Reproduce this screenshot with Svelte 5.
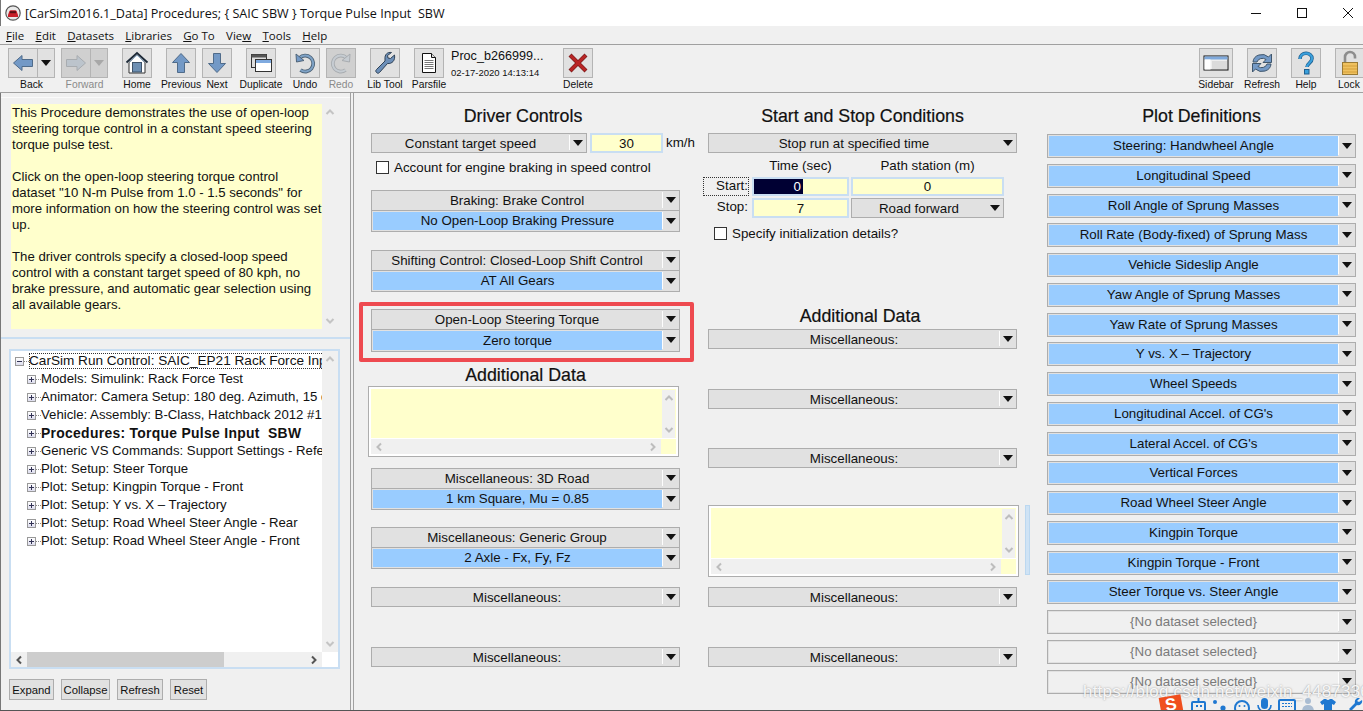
<script>
  const menus = [["F","ile"],["E","dit"],["D","atasets"],["L","ibraries"],["G","o To"],["Vie","w"],["T","ools"],["H","elp"]];
  const help = [
    "This Procedure demonstrates the use of open-loop",
    "steering torque control in a constant speed steering",
    "torque pulse test.",
    "",
    "Click on the open-loop steering torque control",
    "dataset \"10 N-m Pulse from 1.0 - 1.5 seconds\" for",
    "more information on how the steering control was set",
    "up.",
    "",
    "The driver controls specify a closed-loop speed",
    "control with a constant target speed of 80 kph, no",
    "brake pressure, and automatic gear selection using",
    "all available gears."
  ];
  const tree = [
    "Models: Simulink: Rack Force Test",
    "Animator: Camera Setup: 180 deg. Azimuth, 15 deg. Elevation",
    "Vehicle: Assembly: B-Class, Hatchback 2012 #1",
    "Procedures: Torque Pulse Input  SBW",
    "Generic VS Commands: Support Settings - Reference",
    "Plot: Setup: Steer Torque",
    "Plot: Setup: Kingpin Torque - Front",
    "Plot: Setup: Y vs. X – Trajectory",
    "Plot: Setup: Road Wheel Steer Angle - Rear",
    "Plot: Setup: Road Wheel Steer Angle - Front"
  ];
  const plots = [
    "Steering: Handwheel Angle","Longitudinal Speed","Roll Angle of Sprung Masses",
    "Roll Rate (Body-fixed) of Sprung Mass","Vehicle Sideslip Angle","Yaw Angle of Sprung Masses",
    "Yaw Rate of Sprung Masses","Y vs. X – Trajectory","Wheel Speeds","Longitudinal Accel. of CG's",
    "Lateral Accel. of CG's","Vertical Forces","Road Wheel Steer Angle","Kingpin Torque",
    "Kingpin Torque - Front","Steer Torque vs. Steer Angle"
  ];
  const empties = [1,2,3];
</script>

{#snippet chev(dir, color)}
  <svg class="chev" viewBox="0 0 10 10" width="10" height="10">
    {#if dir === "up"}<polyline points="1.5,7 5,3.5 8.5,7" stroke={color} />{/if}
    {#if dir === "down"}<polyline points="1.5,3 5,6.5 8.5,3" stroke={color} />{/if}
    {#if dir === "left"}<polyline points="7,1.5 3.5,5 7,8.5" stroke={color} />{/if}
    {#if dir === "right"}<polyline points="3,1.5 6.5,5 3,8.5" stroke={color} />{/if}
  </svg>
{/snippet}

{#snippet row(text, blue)}
  <div class="row">
    <span class="field" class:blue={blue}>{text}</span>
    <span class="btn"><i class="arrow"></i></span>
  </div>
{/snippet}

{#snippet stack(top, bottom, cls)}
  <div class="stack {cls}">
    {@render row(top, false)}
    {@render row(bottom, true)}
  </div>
{/snippet}

{#snippet single(text, cls)}
  <div class="single {cls}">{@render row(text, false)}</div>
{/snippet}

{#snippet memo(cls)}
  <div class="memo {cls}">
    <div class="memo-text"></div>
    <div class="memo-v">{@render chev("up", "#bdbdbd")}{@render chev("down", "#bdbdbd")}</div>
    <div class="memo-h">{@render chev("left", "#bdbdbd")}{@render chev("right", "#bdbdbd")}</div>
    <div class="memo-corner"></div>
  </div>
{/snippet}

<div class="window">
  <header class="titlebar">
    <svg class="appicon" viewBox="0 0 16 16" width="16" height="16">
      <circle cx="8" cy="8" r="7.2" fill="#e9e9e9" stroke="#555" stroke-width="1.2"/>
      <path d="M3 10 L4.2 6.6 Q4.6 5.2 6 5.2 H10 Q11.4 5.2 11.8 6.6 L13 10 V12 H3 Z" fill="#c8202a"/>
      <rect x="5" y="6.2" width="6" height="2" fill="#5a1015"/>
    </svg>
    <span class="title">[CarSim2016.1_Data] Procedures; &#123; SAIC SBW &#125; Torque Pulse Input  SBW</span>
    <div class="winctl">
      <svg viewBox="0 0 12 12" width="12" height="12"><line x1="1" y1="6.5" x2="11" y2="6.5" stroke="#111"/></svg>
      <svg viewBox="0 0 12 12" width="12" height="12"><rect x="1.5" y="1.5" width="9" height="9" fill="none" stroke="#111"/></svg>
      <svg viewBox="0 0 12 12" width="12" height="12"><path d="M1 1 L11 11 M11 1 L1 11" stroke="#111"/></svg>
    </div>
  </header>

  <nav class="menubar">
    {#each menus as m, i}
      <span class="menu">
        {#if i === 5}Vie<u>w</u>{:else}<u>{m[0]}</u>{m[1]}{/if}
      </span>
    {/each}
  </nav>

  <div class="toolbar">
    <div class="tool wide">
      <div class="face split">
        <span class="main-ic"><svg viewBox="0 0 22 20" width="22" height="20"><path d="M1.5 10 L10 2.5 V6.5 H20.5 V13.5 H10 V17.5 Z" fill="#7399c6" stroke="#4f6b8a"/></svg></span>
        <span class="drop"><i class="arrow"></i></span>
      </div>
      <span class="label">Back</span>
    </div>
    <div class="tool wide g6 off">
      <div class="face split">
        <span class="main-ic"><svg viewBox="0 0 22 20" width="22" height="20"><path d="M20.5 10 L12 2.5 V6.5 H1.5 V13.5 H12 V17.5 Z" fill="#bcc4cc" stroke="#a8acb0"/></svg></span>
        <span class="drop"><i class="arrow grey"></i></span>
      </div>
      <span class="label">Forward</span>
    </div>
    <div class="tool g14">
      <div class="face"><svg viewBox="0 0 24 24" width="24" height="24">
        <path d="M4 11.5 L12 4 L20 11.5 V22 H4 Z" fill="#fff" stroke="#333"/>
        <path d="M1.5 11.5 L12 2 L22.5 11.5" fill="none" stroke="#1d2a38" stroke-width="1.8"/>
        <path d="M4.5 11 L12 4.2 L19.5 11" fill="none" stroke="#8fb0cf" stroke-width="1"/>
        <rect x="7.5" y="11.5" width="9" height="9.5" fill="#6d8fb3" stroke="#3d5269"/>
      </svg></div>
      <span class="label">Home</span>
    </div>
    <div class="tool g14">
      <div class="face"><svg viewBox="0 0 22 24" width="22" height="24"><path d="M11 2.5 L19.5 11.5 H14.5 V21.5 H7.5 V11.5 H2.5 Z" fill="#7399c6" stroke="#4f6b8a"/></svg></div>
      <span class="label">Previous</span>
    </div>
    <div class="tool g6">
      <div class="face"><svg viewBox="0 0 22 24" width="22" height="24"><path d="M11 21.5 L19.5 12.5 H14.5 V2.5 H7.5 V12.5 H2.5 Z" fill="#7399c6" stroke="#4f6b8a"/></svg></div>
      <span class="label">Next</span>
    </div>
    <div class="tool g14">
      <div class="face"><svg viewBox="0 0 24 24" width="24" height="24">
        <rect x="2.5" y="3.5" width="15" height="13" fill="#ddd" stroke="#333"/>
        <rect x="2.5" y="3.5" width="15" height="3" fill="#555"/>
        <rect x="6.5" y="8.5" width="16" height="12" fill="#fff" stroke="#333"/>
        <rect x="7" y="9" width="15" height="3" fill="#7faadf"/>
      </svg></div>
      <span class="label">Duplicate</span>
    </div>
    <div class="tool g14">
      <div class="face"><svg viewBox="0 0 24 24" width="24" height="24">
        <path d="M6.5 7 A8 8 0 1 1 7.5 19" fill="none" stroke="#4f6478" stroke-width="3.8"/>
        <path d="M6.5 7 A8 8 0 1 1 7.5 19" fill="none" stroke="#7ea2c6" stroke-width="2"/>
        <path d="M3 3 L3.5 11 L11 9.5 Z" fill="#7399c6" stroke="#4f6478"/>
      </svg></div>
      <span class="label">Undo</span>
    </div>
    <div class="tool g6 off">
      <div class="face"><svg viewBox="0 0 24 24" width="24" height="24">
        <path d="M17.5 7 A8 8 0 1 0 16.5 19" fill="none" stroke="#a8acb0" stroke-width="3.8"/>
        <path d="M17.5 7 A8 8 0 1 0 16.5 19" fill="none" stroke="#c6ccd2" stroke-width="2"/>
        <path d="M21 3 L20.5 11 L13 9.5 Z" fill="#c6ccd2" stroke="#a8acb0"/>
      </svg></div>
      <span class="label">Redo</span>
    </div>
    <div class="tool g14">
      <div class="face"><svg viewBox="0 0 24 24" width="24" height="24">
        <path d="M21.5 4 L17.5 7.5 L15 7 L14.5 4.5 L18.5 1.5 C14.5 0.8 11.5 3.5 12 8 L12 10 L3.5 18.5 C2.5 19.5 2.5 20.5 3.5 21.5 C4.5 22.5 5.5 22.5 6.5 21.5 L14.5 12.5 C19 13 22.5 9.5 21.5 4 Z" fill="#6d8fb8" stroke="#2f4256"/>
      </svg></div>
      <span class="label">Lib Tool</span>
    </div>
    <div class="tool g14">
      <div class="face"><svg viewBox="0 0 20 24" width="20" height="24">
        <path d="M3.5 2.5 H12.5 L16.5 6.5 V21.5 H3.5 Z" fill="#fff" stroke="#111"/>
        <path d="M12.5 2.5 V6.5 H16.5" fill="#ddd" stroke="#111"/>
        <path d="M5.5 9.5 H14.5 M5.5 11.5 H14.5 M5.5 13.5 H14.5 M5.5 15.5 H14.5 M5.5 17.5 H14.5" stroke="#777"/>
      </svg></div>
      <span class="label">Parsfile</span>
    </div>
    <div class="proc">
      <div class="proc-name">Proc_b266999...</div>
      <div class="proc-date">02-17-2020 14:13:14</div>
    </div>
    <div class="tool del">
      <div class="face"><svg viewBox="0 0 24 24" width="24" height="24">
        <path d="M5.5 5.5 L18.5 18.5 M18.5 5.5 L5.5 18.5" stroke="#7d1c1c" stroke-width="4.2" stroke-linecap="square"/>
        <path d="M5.5 5.5 L18.5 18.5 M18.5 5.5 L5.5 18.5" stroke="#b92525" stroke-width="2.8" stroke-linecap="square"/>
      </svg></div>
      <span class="label">Delete</span>
    </div>

    <div class="tool sidebar">
      <div class="face"><svg viewBox="0 0 26 16" width="26" height="16">
        <rect x="1" y="1" width="24" height="14" fill="#eee" stroke="#111"/>
        <rect x="1.5" y="1.5" width="23" height="3" fill="#7fa9dc"/>
        <rect x="1.5" y="4.5" width="6" height="10" fill="#fff"/>
        <path d="M9 7 H24 M9 9 H24 M9 11 H24 M9 13 H24" stroke="#c8c8c8"/>
      </svg></div>
      <span class="label">Sidebar</span>
    </div>
    <div class="tool g14">
      <div class="face"><svg viewBox="0 0 24 24" width="24" height="24">
        <path d="M3 11 A9 8 0 0 1 18.5 6 L21.5 3 V11.5 H13 L16 8.5 A5.6 5 0 0 0 7 11 Z" fill="#7399c6" stroke="#3f566c"/>
        <path d="M21 13 A9 8 0 0 1 5.5 18 L2.5 21 V12.5 H11 L8 15.5 A5.6 5 0 0 0 17 13 Z" fill="#7399c6" stroke="#3f566c"/>
      </svg></div>
      <span class="label">Refresh</span>
    </div>
    <div class="tool g14">
      <div class="face"><svg viewBox="0 0 20 24" width="20" height="24">
        <path d="M4 8 C4 0.5 16 0.5 16 7.5 C16 12 11 12 11 16" fill="none" stroke="#1f5f8f" stroke-width="3.6"/>
        <path d="M4 8 C4 0.5 16 0.5 16 7.5 C16 12 11 12 11 16" fill="none" stroke="#3aa0dc" stroke-width="2.2"/>
        <rect x="8.5" y="18.5" width="4.5" height="4.5" fill="#3aa0dc" stroke="#1f5f8f"/>
      </svg></div>
      <span class="label">Help</span>
    </div>
    <div class="tool g14">
      <div class="face"><svg viewBox="0 0 18 26" width="18" height="26">
        <path d="M4 13 V7 A5 5 0 0 1 14 7 V8.5" fill="none" stroke="#8d8d8d" stroke-width="2.6"/>
        <rect x="1.5" y="12.5" width="15" height="12" fill="#efc15f" stroke="#9a7a34"/>
        <path d="M2 16 H16 M2 19 H16 M2 22 H16" stroke="#d49f3a"/>
      </svg></div>
      <span class="label">Lock</span>
    </div>
  </div>

  <div class="body">
    <aside class="left">
      <div class="helpbox">
        <div class="helptext">
          {#each help as line}<div class="hl">{line}</div>{/each}
        </div>
        <div class="vbar">{@render chev("up", "#c4c4c4")}{@render chev("down", "#c4c4c4")}</div>
      </div>
      <div class="split-line"></div>
      <div class="treebox">
        <div class="tree">
          <div class="tr root">
            <span class="pm minus"></span><i class="conn"></i><span class="tt focus">CarSim Run Control: SAIC_EP21 Rack Force Input</span>
          </div>
          {#each tree as t, i}
            <div class="tr child" class:strong={i === 3}>
              <span class="pm plus"></span><i class="conn"></i><span class="tt">{t}</span>
            </div>
          {/each}
        </div>
        <div class="vbar tv">{@render chev("up", "#c4c4c4")}{@render chev("down", "#c4c4c4")}</div>
        <div class="hbar">
          <span class="hend">{@render chev("left", "#555")}</span>
          <span class="thumb"></span>
          <span class="hend">{@render chev("right", "#555")}</span>
        </div>
      </div>
      <div class="treebtns">
        <button class="b-expand">Expand</button>
        <button class="b-collapse">Collapse</button>
        <button class="b-refresh">Refresh</button>
        <button class="b-reset">Reset</button>
      </div>
    </aside>

    <main class="panel">
      <section class="col c1">
        <h2 class="head shift">Driver Controls</h2>
        <div class="speedrow">
          <div class="single speed">{@render row("Constant target speed", false)}</div>
          <div class="inp speedval">30</div>
          <span class="unit">km/h</span>
        </div>
        <label class="check ck1"><i class="box"></i>Account for engine braking in speed control</label>
        {@render stack("Braking: Brake Control", "No Open-Loop Braking Pressure", "m14")}
        {@render stack("Shifting Control: Closed-Loop Shift Control", "AT All Gears", "m18")}
        <div class="redwrap">
          {@render stack("Open-Loop Steering Torque", "Zero torque", "")}
          <div class="redbox"></div>
        </div>
        <h2 class="head h-add">Additional Data</h2>
        {@render memo("memo1")}
        {@render stack("Miscellaneous: 3D Road", "1 km Square, Mu = 0.85", "m11")}
        {@render stack("Miscellaneous: Generic Group", "2 Axle - Fx, Fy, Fz", "m17")}
        {@render single("Miscellaneous:", "m18")}
        {@render single("Miscellaneous:", "m40")}
      </section>

      <section class="col c2">
        <h2 class="head">Start and Stop Conditions</h2>
        {@render single("Stop run at specified time", "m6 plain")}
        <div class="times">
          <span></span><span class="th">Time (sec)</span><span class="th">Path station (m)</span>
          <span class="lab startlab">Start:</span>
          <div class="inp sel"><span class="hi"><b>0</b></span></div>
          <div class="inp">0</div>
          <span class="lab stoplab">Stop:</span>
          <div class="inp">7</div>
          <div class="single plain">{@render row("Road forward", false)}</div>
        </div>
        <label class="check ck2"><i class="box"></i>Specify initialization details?</label>
        <h2 class="head h-add2">Additional Data</h2>
        {@render single("Miscellaneous:", "m2")}
        {@render single("Miscellaneous:", "m40")}
        {@render single("Miscellaneous:", "m39")}
        <div class="memowrap">
          {@render memo("memo2")}
          <div class="strip"></div>
        </div>
        {@render single("Miscellaneous:", "m10")}
        {@render single("Miscellaneous:", "m40")}
      </section>

      <section class="col c3">
        <h2 class="head">Plot Definitions</h2>
        <div class="plots">
          {#each plots as p}
            <div class="plot">{@render row(p, true)}</div>
          {/each}
          {#each empties as e}
            <div class="plot none">{@render row("{No dataset selected}", false)}</div>
          {/each}
        </div>
      </section>
    </main>
  </div>

  <div class="watermark">https://blog.csdn.net/weixin_44873367</div>
  <div class="tray">
    <span class="slogo">S</span>
    <svg viewBox="0 0 173 13" width="173" height="13">
      <g fill="#1f78d1">
        <rect x="2" y="4" width="13" height="9" rx="1" fill="none" stroke="#1f78d1" stroke-width="2"/>
        <rect x="7.5" y="0" width="2" height="5"/>
        <rect x="6" y="7" width="2" height="2"/><rect x="10" y="7" width="2" height="2"/>
        <circle cx="25" cy="4" r="2"/><circle cx="33" cy="10" r="2.6"/>
        <circle cx="52" cy="10" r="7" fill="none" stroke="#1f78d1" stroke-width="2"/>
        <circle cx="49.5" cy="8" r="1"/><circle cx="54.5" cy="8" r="1"/>
        <rect x="71" y="0" width="7" height="11" rx="3.5"/>
        <path d="M68 7 a6.5 6.5 0 0 0 13 0" fill="none" stroke="#1f78d1" stroke-width="1.6"/>
        <rect x="89" y="2" width="16" height="12" rx="1" fill="none" stroke="#1f78d1" stroke-width="2"/>
        <path d="M92 5.5 h10 M92 8.5 h10" stroke="#1f78d1" stroke-dasharray="2 1"/>
        <circle cx="118" cy="3" r="3" fill="#a9bcd2"/>
        <path d="M112 14 q0 -7 6 -7 q6 0 6 7 z" fill="#a9bcd2"/>
        <path d="M130 4 l4 -3 h2 q2 2 4 0 h2 l4 3 -2 3 -2 -1 v8 h-8 v-8 l-2 1 z"/>
        <path d="M170 0 a4 4 0 0 0 -5 5 l-6 6 2 2 6 -6 a4 4 0 0 0 5 -5 l-3 2 -2 -1 z"/>
      </g>
    </svg>
  </div>
</div>

<style>
  :global(body) { margin: 0; background: #f0f0f0; }
  .window {
    position: relative;
    width: 1363px;
    height: 711px;
    overflow: hidden;
    background: #f0f0f0;
    font-family: "Liberation Sans", Arial, sans-serif;
    font-size: 14px;
    color: #111;
    box-sizing: border-box;
    border-bottom: 1px solid #555;
    display: flex;
    flex-direction: column;
  }
  .titlebar {
    height: 26px;
    flex: none;
    background: #fff;
    display: flex;
    align-items: center;
    padding-left: 4px;
    border-left: 1px solid #777;
  }
  .appicon { margin-right: 4px; }
  .title {
    font-family: "Open Sans", "Noto Sans", sans-serif;
    font-size: 12.6px;
    white-space: pre;
    color: #111;
  }
  .winctl { margin-left: auto; display: flex; gap: 34px; padding-right: 9px; }
  .menubar {
    height: 18px;
    flex: none;
    display: flex;
    align-items: center;
    gap: 11.3px;
    padding-left: 6px;
    font-family: "Open Sans", "Noto Sans", sans-serif;
    font-size: 11.5px;
    color: #111;
  }
  .toolbar {
    flex: none;
    height: 49px;
    box-sizing: border-box;
    border-top: 1px solid #a0a0a0;
    border-bottom: 1px solid #a0a0a0;
    display: flex;
    padding: 3px 0 0 8px;
  }
  .tool {
    width: 30px;
    flex: none;
    display: flex;
    flex-direction: column;
    align-items: center;
  }
  .tool.wide { width: 47px; }
  .g6 { margin-left: 6px; }
  .g14 { margin-left: 14px; }
  .face {
    width: 100%;
    height: 30px;
    box-sizing: border-box;
    border: 1px solid #b4b4b4;
    background: #e1e1e1;
    display: flex;
    align-items: center;
    justify-content: center;
    flex: none;
  }
  .off .face { background: #d0d0d0; }
  .split { justify-content: flex-start; }
  .main-ic {
    width: 28px;
    height: 100%;
    border-right: 1px solid #b4b4b4;
    display: flex;
    align-items: center;
    justify-content: center;
  }
  .drop { flex: 1; display: flex; justify-content: center; }
  .label {
    font-size: 10.3px;
    line-height: 12px;
    margin-top: 1px;
    white-space: nowrap;
    color: #111;
  }
  .off .label { color: #8a8a8a; }
  .proc { margin-left: 7px; width: 112px; flex: none; }
  .proc-name { font-size: 12.6px; line-height: 14px; margin-top: 1px; white-space: nowrap; }
  .proc-date { font-size: 9.5px; line-height: 12px; margin-top: 4px; white-space: nowrap; }
  .del { margin-left: 0; }
  .sidebar { margin-left: auto; width: 34px; }
  .toolbar > .tool:last-child { width: 28px; }
  .toolbar > .tool:last-child .face { width: 30px; align-self: flex-start; }

  .arrow {
    display: block;
    width: 0;
    height: 0;
    border-left: 5.5px solid transparent;
    border-right: 5.5px solid transparent;
    border-top: 6px solid #111;
  }
  .arrow.grey { border-top-color: #a8a8a8; }

  .body { flex: 1; min-height: 0; display: flex; }
  .left {
    width: 351px;
    flex: none;
    box-sizing: border-box;
    border-left: 1px solid #777;
    border-right: 1px solid #a0a0a0;
    display: flex;
    flex-direction: column;
    padding: 11px 0 0 0;
    position: relative;
  }
  .left::before {
    content: "";
    position: absolute;
    left: 0;
    right: 0;
    top: 4px;
    height: 1px;
    background: #fafafa;
  }
  .helpbox {
    margin-left: 10px;
    width: 327px;
    height: 225px;
    flex: none;
    background: #ffc;
    display: flex;
  }
  .helptext { flex: 1; min-width: 0; padding: 1px 0 0 1px; font-size: 13.2px; }
  .hl { height: 16px; line-height: 16px; white-space: nowrap; }
  .vbar {
    width: 16px;
    flex: none;
    background: #f0f0f0;
    display: flex;
    flex-direction: column;
    justify-content: space-between;
    align-items: center;
    padding: 3px 0;
    box-sizing: border-box;
  }
  .split-line {
    height: 2px;
    flex: none;
    margin-top: 8px;
    background: #c9def2;
  }
  .treebox {
    margin: 10px 0 0 8px;
    width: 331px;
    height: 320px;
    flex: none;
    box-sizing: border-box;
    border: 2px solid #c9def2;
    background: #fff;
    position: relative;
    display: grid;
    grid-template-columns: 311px 16px;
    grid-template-rows: 301px 15px;
  }
  .tree { overflow: hidden; padding-top: 1px; font-size: 13.2px; }
  .tr { height: 18px; display: flex; align-items: center; white-space: pre; }
  .tr.root { padding-left: 4px; }
  .tr.child { padding-left: 16px; }
  .conn {
    width: 5px;
    flex: none;
    height: 0;
    border-top: 1px dotted #888;
  }
  .root .tt { font-size: 13.6px; }
  .tt { line-height: 16px; }
  .focus { outline: 1px dotted #333; outline-offset: -1px; }
  .strong .tt { font-weight: 700; font-size: 13.9px; letter-spacing: 0.3px; }
  .pm {
    width: 9px;
    height: 9px;
    flex: none;
    box-sizing: border-box;
    border: 1px solid #999;
    background: linear-gradient(#fff, #dde);
    position: relative;
  }
  .pm::before {
    content: "";
    position: absolute;
    left: 1px;
    top: 3px;
    width: 5px;
    height: 1px;
    background: #335;
  }
  .plus::after {
    content: "";
    position: absolute;
    left: 3px;
    top: 1px;
    width: 1px;
    height: 5px;
    background: #335;
  }
  .tv { background: #f0f0f0; }
  .hbar {
    grid-column: 1;
    grid-row: 2;
    background: #f0f0f0;
    display: flex;
    align-items: center;
  }
  .hend { width: 16px; flex: none; display: flex; justify-content: center; }
  .hend:last-child { margin-left: auto; }
  .thumb { width: 197px; height: 100%; background: #cdcdcd; }
  .chev { display: block; }
  .chev polyline { fill: none; stroke-width: 2; }
  .treebtns { display: flex; gap: 7px; margin: 10px 0 0 8px; }
  .treebtns button {
    height: 21px;
    padding: 0;
    box-sizing: border-box;
    border: 1px solid #adadad;
    background: #e1e1e1;
    font: 11.3px "Liberation Sans", Arial, sans-serif;
    color: #111;
  }
  .b-expand { width: 45px; }
  .b-collapse { width: 49px; }
  .b-refresh { width: 46px; }
  .b-reset { width: 37px; }

  .panel {
    flex: 1;
    min-width: 0;
    margin-left: 2px;
    border-left: 1px solid #a0a0a0;
    display: flex;
    padding: 12px 0 0 17px;
  }
  .col { width: 309px; flex: none; display: flex; flex-direction: column; }
  .c2 { margin-left: 28px; }
  .c3 { margin-left: 30px; }
  .head {
    margin: 0;
    height: 22px;
    line-height: 23px;
    font-size: 17.8px;
    font-weight: 400;
    text-align: center;
    white-space: nowrap;
    -webkit-text-stroke: 0.2px #111;
  }
  .shift { padding-right: 5px; }
  .h-add { margin-top: 12px; }
  .h-add2 { margin-top: 63px; margin-right: 5px; }

  .row { display: flex; flex: 1; min-height: 0; }
  .field {
    flex: 1;
    min-width: 0;
    display: flex;
    align-items: center;
    justify-content: center;
    white-space: nowrap;
    font-size: 13.35px;
    box-sizing: border-box;
    padding-bottom: 1px;
  }
  .single .field { padding-bottom: 0; }
  .field.blue { background: #9cf; margin: 1px 0 1px 1px; }
  .btn {
    width: 17px;
    flex: none;
    display: flex;
    align-items: center;
    justify-content: center;
    border-left: 1px solid #fdfdfd;
    margin: 1px 0 2px;
    box-sizing: border-box;
  }
  .single, .stack {
    box-sizing: border-box;
    border: 1px solid #adadad;
    background: #e1e1e1;
    display: flex;
    flex: none;
  }
  .single { height: 20px; }
  .stack { height: 42px; flex-direction: column; }
  .stack > .row:first-child { border-bottom: 1px solid #adadad; max-height: 19px; }
  .plain .btn { border-left: 0; }
  .m2 { margin-top: 2px; }
  .m6 { margin-top: 6px; }
  .m10 { margin-top: 10px; }
  .m11 { margin-top: 11px; }
  .m14 { margin-top: 14px; }
  .m17 { margin-top: 17px; }
  .m18 { margin-top: 18px; }
  .m39 { margin-top: 39px; }
  .m40 { margin-top: 40px; }

  .speedrow { margin-top: 6px; display: flex; height: 20px; }
  .speed { width: 216px; }
  .inp {
    box-sizing: border-box;
    border: 2px solid #c9def2;
    background: #ffc;
    display: flex;
    align-items: center;
    justify-content: center;
    font-size: 13.35px;
    min-width: 0;
  }
  .speedval { width: 73px; flex: none; margin-left: 3px; }
  .unit { margin-left: 3px; flex: none; line-height: 20px; font-size: 13.35px; white-space: nowrap; }
  .check { display: flex; align-items: center; height: 18px; font-size: 13.35px; white-space: nowrap; }
  .box {
    width: 13px;
    height: 13px;
    box-sizing: border-box;
    border: 1px solid #333;
    background: #fff;
    flex: none;
    margin-right: 5px;
  }
  .ck1 { margin: 5px 0 0 5px; }
  .ck2 { margin: 6px 0 0 6px; }

  .redwrap { position: relative; margin-top: 17px; display: flex; flex-direction: column; }
  .redbox {
    position: absolute;
    left: -12px;
    right: -14px;
    top: -7px;
    bottom: -10px;
    border: 4px solid #ee4a50;
    border-radius: 2px;
    pointer-events: none;
  }
  .redwrap .stack { height: 43px; }

  .memo {
    box-sizing: border-box;
    background: #fff;
    border: 1px solid #adadad;
    padding: 2px;
    display: grid;
    grid-template-columns: 1fr 15px;
    grid-template-rows: 1fr 15px;
    gap: 1px 0;
    flex: none;
  }
  .memo1 { width: 311px; height: 71px; margin-left: -3px; }
  .memo2 { width: 311px; height: 72px; }
  .memo-text { background: #ffc; }
  .memo-v, .memo-corner { background: #f0f0f0; }
  .memo-v {
    display: flex;
    flex-direction: column;
    align-items: center;
    justify-content: space-between;
    padding: 3px 0;
    border: 1px solid #ffc;
    border-bottom: 0;
  }
  .memo-h {
    background: #f0f0f0;
    display: flex;
    align-items: center;
    justify-content: space-between;
    padding: 0 3px;
  }
  .memo-corner { background: #ffc; }

  .times {
    display: grid;
    grid-template-columns: 46px 97px 152px;
    grid-template-rows: 18px 19px 20px;
    column-gap: 3px;
    row-gap: 2px;
    margin: 4px 0 0 -5px;
  }
  .times > :nth-child(3n) { margin-left: -1px; }
  .th { text-align: center; line-height: 18px; font-size: 13.35px; white-space: nowrap; }
  .lab { text-align: right; line-height: 18px; font-size: 13.35px; padding-right: 1px; }
  .startlab { outline: 1px dotted #333; outline-offset: -1px; }
  .sel { justify-content: flex-start; }
  .hi {
    width: 49px;
    height: 15px;
    background: #003;
    color: #fff;
    display: block;
    text-align: right;
    line-height: 15px;
  }
  .hi b { font-weight: 400; margin-right: 2px; }

  .memowrap { position: relative; margin-top: 37px; display: flex; }
  .strip {
    position: absolute;
    left: 317px;
    top: 0;
    width: 5px;
    height: 70px;
    background: #cfe3f5;
    border: 1px solid #bcd8f0;
    box-sizing: border-box;
  }

  .plots { display: flex; flex-direction: column; gap: 5.78px; margin-top: 7px; }
  .plot {
    height: 24px;
    box-sizing: border-box;
    border: 1px solid #adadad;
    background: #e1e1e1;
    display: flex;
    flex: none;
  }
  .none .field { background: #f0f0f0; color: #7a7a7a; margin: 1px 0 1px 1px; }

  .watermark {
    position: absolute;
    left: 1083px;
    top: 682px;
    font-size: 17px;
    letter-spacing: 0.2px;
    color: rgba(255, 255, 255, 0.9);
    white-space: nowrap;
    text-shadow: 0 0 2px rgba(90, 90, 90, 0.6);
  }
  .tray {
    position: absolute;
    left: 1190px;
    right: 0;
    bottom: 0;
    height: 12px;
    display: flex;
    align-items: flex-start;
  }
  .tray svg { flex: none; }
  .slogo {
    position: absolute;
    left: -30px;
    top: -2px;
    width: 22px;
    height: 17px;
    background: #f04f1e;
    color: #fff;
    font-weight: 700;
    font-size: 17px;
    line-height: 17px;
    text-align: center;
    transform: rotate(-10deg);
  }
</style>
